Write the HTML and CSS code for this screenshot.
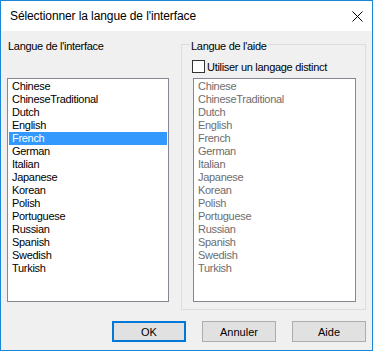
FILE: index.html
```html
<!DOCTYPE html>
<html lang="fr">
<head>
	<meta charset="utf-8"/>
	<title>Sélectionner la langue de l'interface</title>
	<link rel="stylesheet" href="styles.css">
</head>
<body>

<div class="window">
	<div class="titlebar">
		<span class="title">Sélectionner la langue de l'interface</span>
		<svg class="close" width="11" height="11" viewBox="0 0 11 11">
			<path d="M0.5 0.5 L10.5 10.5 M10.5 0.5 L0.5 10.5" stroke="#000" stroke-width="1" fill="none"/>
		</svg>
	</div>

	<div class="client">
		<div class="panes">
			<div class="pane">
				<div class="label">Langue de l'interface</div>
				<ul class="list">
					<li>Chinese</li>
					<li>ChineseTraditional</li>
					<li>Dutch</li>
					<li>English</li>
					<li class="selected">French</li>
					<li>German</li>
					<li>Italian</li>
					<li>Japanese</li>
					<li>Korean</li>
					<li>Polish</li>
					<li>Portuguese</li>
					<li>Russian</li>
					<li>Spanish</li>
					<li>Swedish</li>
					<li>Turkish</li>
				</ul>
			</div>

			<div class="group">
				<div class="group-title">Langue de l'aide</div>
				<div class="check-row">
					<span class="checkbox"></span>
					<span>Utiliser un langage distinct</span>
				</div>
				<ul class="list disabled">
					<li>Chinese</li>
					<li>ChineseTraditional</li>
					<li>Dutch</li>
					<li>English</li>
					<li>French</li>
					<li>German</li>
					<li>Italian</li>
					<li>Japanese</li>
					<li>Korean</li>
					<li>Polish</li>
					<li>Portuguese</li>
					<li>Russian</li>
					<li>Spanish</li>
					<li>Swedish</li>
					<li>Turkish</li>
				</ul>
			</div>
		</div>

		<div class="buttons">
			<button class="default">OK</button>
			<button>Annuler</button>
			<button>Aide</button>
		</div>
	</div>
</div>

</body>
</html>
```

FILE: styles.css
```css
body {
	margin: 0;
	padding: 0;
	background: #fff;
	color: #000;
	font: 11px 'Liberation Sans', Arial, sans-serif;
	letter-spacing: -0.3px;
}

.window {
	width: 373px;
	height: 351px;
	box-sizing: border-box;
	border: 1px solid #1a86d8;
	background: #f0f0f0;
	display: flex;
	flex-direction: column;
}

.titlebar {
	height: 30px;
	background: #fff;
	display: flex;
	align-items: center;
	justify-content: space-between;
	padding: 0 9px 0 9px;
}

.title {
	font-size: 12px;
	letter-spacing: -0.1px;
	color: #000;
}

.close {
	display: block;
}

.client {
	padding: 0 6px;
}

.panes {
	display: flex;
	gap: 12px;
}

.pane {
	width: 162px;
	padding-top: 9px;
}

.label {
	line-height: 13px;
	padding-left: 1px;
}

.list {
	list-style: none;
	margin: 25px 0 0 0;
	padding: 1px;
	height: 224px;
	box-sizing: border-box;
	background: #fff;
	border: 1px solid #828790;
}

.list li {
	line-height: 13px;
	height: 13px;
	padding-left: 3px;
	white-space: nowrap;
}

.list li.selected {
	background: #3399ff;
	color: #fff;
}

.list.disabled {
	color: #6d6d6d;
}

.group {
	width: 185px;
	height: 266px;
	box-sizing: border-box;
	margin-top: 13px;
	border: 1px solid #dcdcdc;
}

.group-title {
	width: fit-content;
	margin: -5px 0 0 8px;
	padding: 0 1px;
	line-height: 13px;
	background: #f0f0f0;
}

.check-row {
	display: flex;
	align-items: center;
	gap: 2px;
	height: 13px;
	margin: 7px 0 0 10px;
}

.checkbox {
	width: 13px;
	height: 13px;
	box-sizing: border-box;
	border: 1px solid #333;
	background: #fff;
}

.group .list {
	width: 163px;
	margin: 5px 0 0 11px;
}

.buttons {
	display: flex;
	justify-content: flex-end;
	gap: 16px;
	margin-top: 11px;
}

button {
	width: 74px;
	height: 21px;
	margin: 0;
	padding: 0;
	box-sizing: border-box;
	background: #e1e1e1;
	border: 1px solid #adadad;
	border-radius: 0;
	font: inherit;
	color: #000;
}

button.default {
	border: 2px solid #0078d7;
}
```
